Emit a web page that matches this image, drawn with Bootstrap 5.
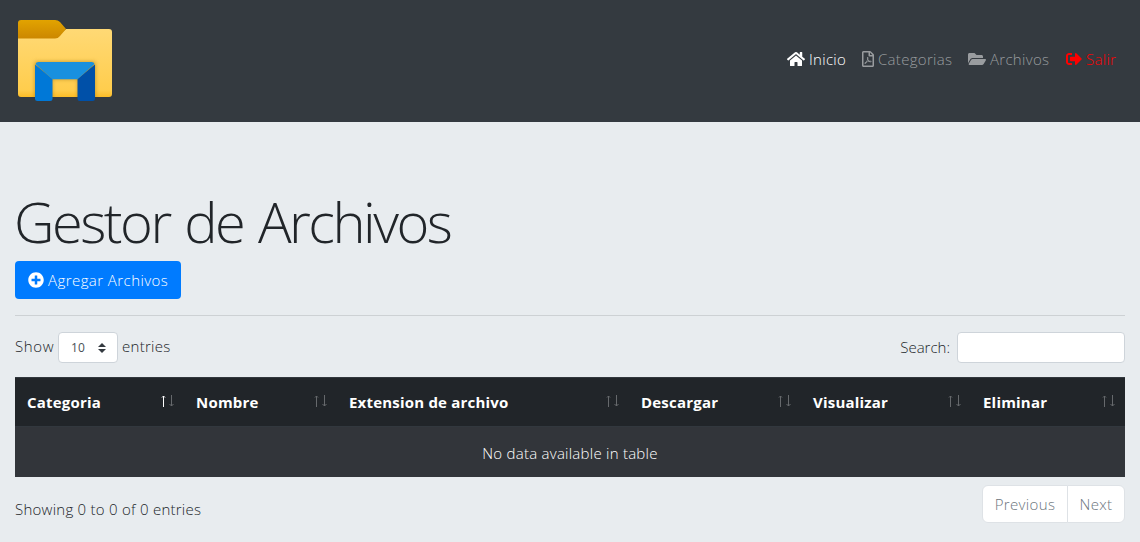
<!DOCTYPE html>
<html lang="es">
<head>
<meta charset="utf-8">
<meta name="viewport" content="width=device-width, initial-scale=1">
<title>Gestor de Archivos</title>
<link href="https://cdn.jsdelivr.net/npm/bootstrap@5.3.0/dist/css/bootstrap.min.css" rel="stylesheet">
<style>
body{background:#e8ecef;color:#212529;font-family:"Open Sans","Noto Sans",sans-serif;font-weight:300;font-size:15px;line-height:24px;letter-spacing:.25px;overflow:hidden}
.topbar{background:#343a40;height:122px;padding:0 15px}
.topbar .navbar-nav{padding-bottom:4px}
.topbar .nav-link{padding:8px;color:#999c9f;white-space:nowrap;line-height:24px;letter-spacing:.3px}
.topbar .nav-link.active{color:#fff}
.topbar .nav-link.leave{color:red}
.fa-i{height:16px;fill:currentColor;vertical-align:-2px;margin-right:4px}
.w-ini{width:75px}.w-cat{width:106px}.w-arc{width:98px}.w-sal{width:67px}
.page{padding:66px 15px 0}
.page h1{font-size:56px;line-height:67px;font-weight:300;margin:0 0 6px -1px;white-space:nowrap;letter-spacing:-2.5px;word-spacing:2.5px}
.btn-add{background:#007bff;color:#fff;border:0;border-radius:4px;width:166px;height:38px;padding:0 0 0 13px;font-size:15px;font-weight:300;white-space:nowrap;text-align:left;letter-spacing:.44px}
.rule{border:0;border-top:1px solid #cdd1d4;opacity:1;margin:16px 0}
.lift{padding-bottom:4px}
.t-show{letter-spacing:.6px}
.t-search{letter-spacing:0;padding-bottom:2px}
.len{width:60px;height:31px;font-size:12px;border:1px solid #ced4da;border-radius:4px;background:#fff;padding:0 11px 0 12px;margin:0 4px;color:#495057;font-weight:400;letter-spacing:0}
.find{width:168px;height:31px;border:1px solid #ced4da;border-radius:4px;margin-left:7px;padding:0 8px}
.grid{table-layout:fixed;width:1110px;margin:14px 0 0;border-collapse:separate;border-spacing:0;color:#fff}
.grid th{background:#212529;height:49px;padding:0 9px 0 12px;font-weight:700;letter-spacing:.2px;border-top:1px solid #32383e;white-space:nowrap}
.grid td{background:#32353a;height:51px;padding:2px 0 0;border-top:1px solid #32383e;text-align:center}
.sorter{width:14px;height:12px;fill:none;stroke:#66696c;margin-top:-3px}
.pager .page-link{color:#6c757d;background:#fff;border-color:#dee2e6;height:38px;padding:6px 0;text-align:center;line-height:24px;font-size:15px;letter-spacing:.35px}
.p1{width:86px}.p2{width:58px}
</style>
</head>
<body>
<nav class="topbar d-flex align-items-center justify-content-between">
<a href="#" class="d-block" aria-label="Inicio"><svg class="d-block" width="100" height="100" viewBox="15 11 100 100">
<defs>
<linearGradient id="g1" x2="0" y2="1"><stop stop-color="#e2a300"/><stop offset="1" stop-color="#cc8700"/></linearGradient>
<linearGradient id="g2" x2="0" y2="1"><stop stop-color="#ffd975"/><stop offset=".9" stop-color="#ffcd4d"/><stop offset="1" stop-color="#fdbd27"/></linearGradient>
<filter id="sh" x="-20%" y="-20%" width="140%" height="140%"><feGaussianBlur stdDeviation="2.2"/></filter>
<clipPath id="fold"><path d="M18 30H60L67 29H109a3 3 0 0 1 3 3V94a3 3 0 0 1-3 3H21a3 3 0 0 1-3-3z"/></clipPath>
</defs>
<path d="M18 36L60 34 66 29H109a3 3 0 0 1 3 3V94a3 3 0 0 1-3 3H21a3 3 0 0 1-3-3z" fill="url(#g2)"/>
<path d="M21 20H55q3 0 5 2l6 7-6 7q-2 2.500-5 2.500H18V23a3 3 0 0 1 3-3z" fill="url(#g1)"/>
<g clip-path="url(#fold)"><path d="M35 62H95V101H78V79H52V101H35z" fill="#9a6b00" opacity=".6" filter="url(#sh)"/></g>
<path d="M35 64.500L52.500 79V98.500a2.500 2.500 0 0 1-2.500 2.500H37.500a2.500 2.500 0 0 1-2.500-2.500z" fill="#0078d7"/>
<path d="M95 64.500L77.500 79V98.500A2.500 2.500 0 0 0 80 101H92.500a2.500 2.500 0 0 0 2.500-2.500z" fill="#0050a8"/>
<path d="M35.500 64Q36 62 38.500 62H91.500Q94 62 94.500 64L77.500 79.300H52.500z" fill="#1890df"/>
</svg></a>
<ul class="navbar-nav flex-row">
<li class="nav-item w-ini"><a class="nav-link active" href="#"><svg class="fa-i" viewBox="0 0 576 512"><path d="M280.37 148.26L96 300.11V464a16 16 0 0 0 16 16l112.06-.29a16 16 0 0 0 15.92-16V368a16 16 0 0 1 16-16h64a16 16 0 0 1 16 16v95.64a16 16 0 0 0 16 16.05L464 480a16 16 0 0 0 16-16V300L295.67 148.26a12.19 12.19 0 0 0-15.3 0zM571.6 251.47L488 182.56V44.05a12 12 0 0 0-12-12h-56a12 12 0 0 0-12 12v72.61L318.47 43a48 48 0 0 0-61 0L4.34 251.47a12 12 0 0 0-1.6 16.9l25.5 31A12 12 0 0 0 45.15 301l235.22-193.74a12.19 12.19 0 0 1 15.3 0L530.9 301a12 12 0 0 0 16.9-1.6l25.5-31a12 12 0 0 0-1.7-16.93z"/></svg><span>Inicio</span></a></li>
<li class="nav-item w-cat"><a class="nav-link" href="#"><svg class="fa-i" viewBox="0 0 384 512"><path d="M369.9 97.9L286 14C277 5 264.8-.1 252.1-.1H48C21.5 0 0 21.5 0 48v416c0 26.500 21.500 48 48 48h288c26.500 0 48-21.500 48-48V131.900c0-12.700-5.100-25-14.100-34zM332.100 128H256V51.900l76.100 76.100zM48 464V48h160v104c0 13.300 10.700 24 24 24h104v288H48zm250.200-143.700c-12.200-12-47-8.700-64.400-6.500-17.200-10.500-28.700-25-36.800-46.300 3.900-16.100 10.100-40.600 5.400-56-4.200-26.200-37.800-23.600-42.600-5.900-4.400 16.100-.4 38.500 7 67.100-10 23.900-24.900 56-35.400 74.400-20 10.300-47 26.200-51 46.200-3.300 15.800 26 55.200 76.100-31.200 22.400-7.400 46.800-16.500 68.400-20.100 18.900 10.200 41 17 55.800 17 25.500 0 28-28.200 17.500-38.700zm-198.100 77.800c5.100-13.700 24.500-29.500 30.400-35-19 30.300-30.400 35.700-30.400 35zm81.600-190.600c7.400 0 6.700 32.100 1.800 40.800-4.400-13.900-4.300-40.800-1.800-40.800zm-24.400 136.600c9.700-16.900 18-37 24.700-54.700 8.300 15.100 18.900 27.200 30.100 35.500-20.800 4.300-38.900 13.100-54.800 19.200zm131.600-5s-5 6-37.300-7.800c35.100-2.600 40.900 5.400 37.300 7.800z"/></svg><span>Categorias</span></a></li>
<li class="nav-item w-arc"><a class="nav-link" href="#"><svg class="fa-i" viewBox="0 0 576 512"><path d="M572.694 292.093L500.27 416.248A63.997 63.997 0 0 1 444.989 448H45.025c-18.523 0-30.064-20.093-20.731-36.093l72.424-124.155A64 64 0 0 1 152 256h399.964c18.523 0 30.064 20.093 20.73 36.093zM152 224h328v-48c0-26.510-21.490-48-48-48H272l-64-64H48C21.490 64 0 85.490 0 112v278.046l69.077-118.418C86.214 242.250 117.989 224 152 224z"/></svg><span>Archivos</span></a></li>
<li class="nav-item w-sal"><a class="nav-link leave" href="#"><svg class="fa-i" viewBox="0 0 512 512"><path d="M497 273L329 441c-15 15-41 4.500-41-17v-96H152c-13.300 0-24-10.700-24-24v-96c0-13.300 10.700-24 24-24h136V88c0-21.400 25.900-32 41-17l168 168c9.300 9.400 9.300 24.600 0 34zM192 436v-40c0-6.600-5.400-12-12-12H96c-17.700 0-32-14.300-32-32V160c0-17.700 14.300-32 32-32h84c6.600 0 12-5.400 12-12V76c0-6.600-5.400-12-12-12H96c-53 0-96 43-96 96v192c0 53 43 96 96 96h84c6.600 0 12-5.400 12-12z"/></svg><span>Salir</span></a></li>
</ul>
</nav>
<main class="page">
<h1>Gestor de Archivos</h1>
<button class="btn btn-add d-block" type="button"><svg class="fa-i" viewBox="0 0 512 512"><path d="M256 8C119 8 8 119 8 256s111 248 248 248 248-111 248-248S393 8 256 8zm144 276c0 6.600-5.400 12-12 12h-92v92c0 6.600-5.400 12-12 12h-56c-6.600 0-12-5.400-12-12v-92h-92c-6.600 0-12-5.400-12-12v-56c0-6.600 5.400-12 12-12h92v-92c0-6.600 5.400-12 12-12h56c6.600 0 12 5.400 12 12v92h92c6.600 0 12 5.400 12 12v56z"/></svg><span>Agregar Archivos</span></button>
<hr class="rule">
<div class="d-flex justify-content-between">
<div class="d-flex align-items-center"><span class="t-show lift">Show</span><span class="len d-flex align-items-center justify-content-between">10<svg width="8" height="10" viewBox="0 0 8 10" fill="#343a40"><path d="M0 4L4 0 8 4zM0 6H8L4 10z"/></svg></span><span class="lift">entries</span></div>
<label class="d-flex align-items-center"><span class="t-search">Search:</span><input class="find" type="search"></label>
</div>
<table class="grid">
<colgroup><col style="width:169px"><col style="width:153px"><col style="width:292px"><col style="width:172px"><col style="width:170px"><col style="width:154px"></colgroup>
<thead><tr>
<th><div class="d-flex justify-content-between align-items-center"><span>Categoria</span><svg class="sorter" viewBox="0 0 14 12"><path stroke="#fff" d="M2.500 12V1M1 2.500L2.500 1 4 2.500"/><path d="M10.500 0V11M8.500 9L10.500 11 12.500 9"/></svg></div></th>
<th><div class="d-flex justify-content-between align-items-center"><span>Nombre</span><svg class="sorter" viewBox="0 0 14 12"><path d="M2.500 12V1M1 2.500L2.500 1 4 2.500M10.500 0V11M8.500 9L10.500 11 12.500 9"/></svg></div></th>
<th><div class="d-flex justify-content-between align-items-center"><span>Extension de archivo</span><svg class="sorter" viewBox="0 0 14 12"><path d="M2.500 12V1M1 2.500L2.500 1 4 2.500M10.500 0V11M8.500 9L10.500 11 12.500 9"/></svg></div></th>
<th><div class="d-flex justify-content-between align-items-center"><span>Descargar</span><svg class="sorter" viewBox="0 0 14 12"><path d="M2.500 12V1M1 2.500L2.500 1 4 2.500M10.500 0V11M8.500 9L10.500 11 12.500 9"/></svg></div></th>
<th><div class="d-flex justify-content-between align-items-center"><span>Visualizar</span><svg class="sorter" viewBox="0 0 14 12"><path d="M2.500 12V1M1 2.500L2.500 1 4 2.500M10.500 0V11M8.500 9L10.500 11 12.500 9"/></svg></div></th>
<th><div class="d-flex justify-content-between align-items-center"><span>Eliminar</span><svg class="sorter" viewBox="0 0 14 12"><path d="M2.500 12V1M1 2.500L2.500 1 4 2.500M10.500 0V11M8.500 9L10.500 11 12.500 9"/></svg></div></th>
</tr></thead>
<tbody><tr><td colspan="6"><span>No data available in table</span></td></tr></tbody>
</table>
<div class="d-flex justify-content-between pt-2">
<div class="pt-1 mt-2"><span>Showing 0 to 0 of 0 entries</span></div>
<ul class="pagination pager m-0"><li class="page-item disabled"><a class="page-link p1">Previous</a></li><li class="page-item disabled"><a class="page-link p2">Next</a></li></ul>
</div>
</main>
</body>
</html>
